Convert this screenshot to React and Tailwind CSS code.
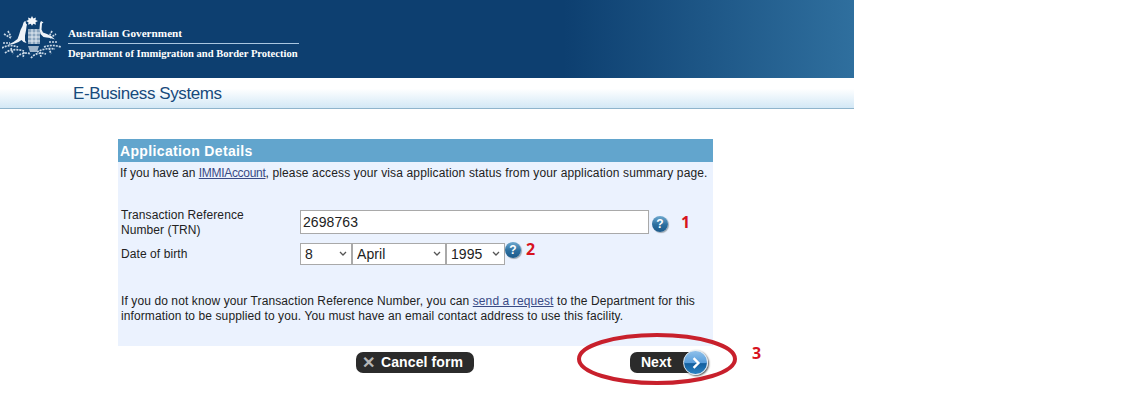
function Crest() {
  return (
    <svg width="62" height="46" viewBox="2 0 62 46" fill="none" className="shrink-0">
      {/* star */}
      <path d="M32 1l1.3 2.4 2.6-1-.4 2.7 2.5 1-2.5 1.2.4 2.4-2.6-.9-1.3 2-1.3-2-2.6.9.4-2.4-2.5-1.2 2.5-1-.4-2.7 2.6 1z" fill="#f4f7fa" />
      {/* wattle */}
      <path d="M8 16l3 6M4 19l7 4M3 28l7 0M2 33c5-3 11-3 16-1M5 38c5-4 13-4 19-2M17 42c4-4 9-5 14-3 M31 43c3-4 9-6 15-4M37 37c5-3 12-4 18-3M44 32c5-2 11-2 17 0M49 27l8 0M50 23l6-4M52 16l-3 6M11 33l2 6M49 33l2 6M24 37l-1 6M40 37l1 5"
        stroke="#c9d8e6" strokeWidth="1.7" strokeDasharray="2 1" />
      {/* shield */}
      <rect x="28" y="14" width="12" height="15" fill="#8aa5be" />
      <path d="M28 18h12M28 22h12M28 26h12M32 14v15M36 14v15" stroke="#e3ebf2" strokeWidth="1" />
      <path d="M28 31h11l-2 6h-7z" fill="#9fb5ca" />
      {/* kangaroo */}
      <path d="M25 6l-1.5 1.5-1 3.5-2 4-1.5 5-1.5 4-4 3-6 3 6-1 5-2 3-2 2 2 3 1-1.500-2.500 0-5 1-5 .5-4 .5-2-1-1-.5-2.500z" fill="#eef3f8" />
      {/* emu */}
      <path d="M41 6l2.500 1.500-1.500 1 -.5 6 1.500 3 4 1.500 4 2 4 3.500-4.500-1.500-4-.5-3-.5-3-3-1-5 .5-6z" fill="#eef3f8" />
    </svg>
  );
}

function HelpIcon() {
  return (
    <span className="flex h-4 w-4 shrink-0 items-center justify-center rounded-full bg-[linear-gradient(#6fa9cf,#2a6e9f_55%,#1c5a8a)] shadow-[1px_1px_1px_#9aa5ae] font-['Liberation_Sans',sans-serif] text-[12px] font-bold leading-none text-white">
      ?
    </span>
  );
}

function Pick({ value, width }) {
  return (
    <div className={`${width} relative h-[22px]`}>
      <select
        defaultValue={value}
        className="h-full w-full appearance-none border border-[#a9a9a9] bg-white pl-[4px] text-[14px] text-[#222] outline-none"
      >
        <option>{value}</option>
      </select>
      <svg className="pointer-events-none absolute right-[5px] top-[8px]" width="8" height="6" viewBox="0 0 8 6" fill="none">
        <path d="M1 1l3 3 3-3" stroke="#555" strokeWidth="1.3" />
      </svg>
    </div>
  );
}

export default function App() {
  return (
    <div className="relative h-[412px] w-[1127px] overflow-hidden bg-white font-['Liberation_Sans',Arial,sans-serif] text-[12px] tracking-[0.085px] text-[#222]">
      {/* Banner */}
      <div className="flex h-[78px] w-[854px] items-start bg-[linear-gradient(90deg,#0d3f70_0%,#0d3f70_66%,#2f6f9e_100%)] pl-[2px] pt-[15px] tracking-normal">
        <Crest />
        <div className="ml-[4px] mt-[12px] w-[231px] font-['Liberation_Serif',serif] font-bold text-white">
          <div className="text-[11.2px] leading-[13px]">Australian Government</div>
          <div className="mt-[3px] border-t border-[#a9c6e0] pt-[3px] text-[10.55px] leading-[13px] whitespace-nowrap">
            Department of Immigration and Border Protection
          </div>
        </div>
      </div>
      <div className="h-[31px] w-[854px] border-b border-[#8fb4cc] bg-[linear-gradient(#fff_0%,#fff_35%,#d3e8f6_100%)] pl-[73px] pt-[4px] text-[17px] leading-[24px] tracking-[-0.4px] text-[#174a7c]">
        E-Business Systems
      </div>

      {/* Form panel */}
      <div className="ml-[118px] mt-[30px] h-[207px] w-[595px] bg-[#ebf2fe]">
        <div className="h-[23px] bg-[#62a5cd] pl-[2px] text-[14px] font-bold leading-[24px] tracking-[0.35px] text-white">
          Application Details
        </div>
        <p className="pl-[2px] pt-[4px] leading-[15px] tracking-normal">
          If you have an <a className="tracking-[-0.3px] text-[#3a4a85] underline">IMMIAccount</a><span className="tracking-[0.14px]">, please access your visa application status from your application summary page.</span>
        </p>

        <div className="mt-[26px] flex pl-[3px]">
          <div className="w-[179px] pt-[1px] leading-[15px]">
            Transaction Reference<br />Number (TRN)
          </div>
          <input
            readOnly
            value="2698763"
            className="mt-[3px] h-[24px] w-[349px] border border-[#a9a9a9] bg-white px-[2px] text-[14px] text-[#222] outline-none"
          />
          <div className="ml-[3px] mt-[9px]"><HelpIcon /></div>
        </div>

        <div className="mt-[5px] flex items-start pl-[3px]">
          <div className="w-[179px] pt-[4px] leading-[15px]">Date of birth</div>
          <div className="flex">
            <Pick value="8" width="w-[52px]" />
            <Pick value="April" width="w-[94px]" />
            <Pick value="1995" width="w-[59px]" />
          </div>
          <div className="mt-[-1px]"><HelpIcon /></div>
        </div>

        <p className="mt-[29px] pl-[3px] leading-[15px] tracking-[0.1px]">
          If you do not know your Transaction Reference Number, you can <a className="text-[#3a4a85] underline">send a request</a> to the Department for this<br />
          information to be supplied to you. You must have an email contact address to use this facility.
        </p>
      </div>

      {/* Buttons */}
      <div className="ml-[356px] mt-[4px] flex items-center tracking-normal">
        <button className="flex h-[21px] w-[118px] items-center rounded-[7px] bg-[#2b2b2b] pl-[6px] text-[14px] font-bold text-white">
          <span className="w-[19px] text-left text-[16px] leading-none text-[#b5b5b5]">✕</span>
          <span className="tracking-[0.1px]">Cancel form</span>
        </button>
        <button className="ml-[156px] flex h-[21px] w-[63px] items-center rounded-l-[7px] bg-[#2b2b2b] pl-[11px] text-[14px] font-bold text-white">
          Next
        </button>
        <span className="ml-[-10px] flex h-[25px] w-[25px] items-center justify-center rounded-full border border-[#dfe8ef] bg-[linear-gradient(#8fc0ea_0%,#5a9fdc_50%,#135f9e_55%,#2a83c4_100%)] shadow-[1px_1px_2px_#555]">
          <svg width="12" height="12" viewBox="0 0 10 10" fill="none">
            <path d="M3 1l4 4-4 4" stroke="#fff" strokeWidth="2" />
          </svg>
        </span>
      </div>

      {/* Annotations drawn over the page */}
      <span className="absolute left-[681px] top-[211px] font-['Open_Sans',sans-serif] text-[16px] font-bold leading-[22px] tracking-normal text-[#d7141e]">1</span>
      <span className="absolute left-[526px] top-[238px] font-['Open_Sans',sans-serif] text-[16px] font-bold leading-[22px] tracking-normal text-[#d7141e]">2</span>
      <span className="absolute left-[752px] top-[342px] font-['Open_Sans',sans-serif] text-[16px] font-bold leading-[22px] tracking-normal text-[#d7141e]">3</span>
      <svg className="absolute left-[575px] top-[330px]" width="166" height="60" viewBox="0 0 166 60" fill="none">
        <ellipse cx="82" cy="29" rx="78" ry="24" stroke="#c8202c" strokeWidth="4" />
      </svg>
    </div>
  );
}
